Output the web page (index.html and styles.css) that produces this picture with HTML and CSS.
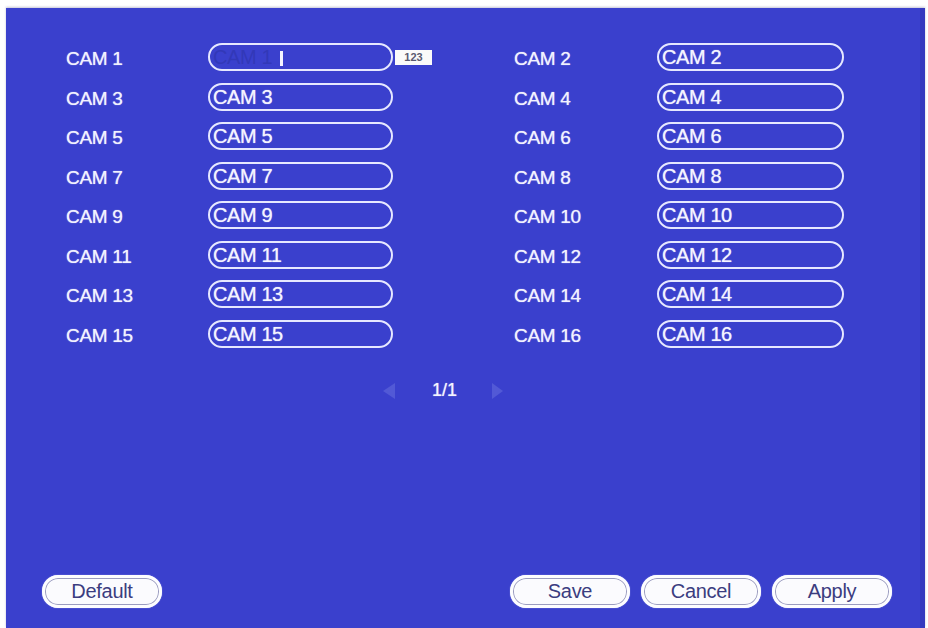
FILE: index.html
```html
<!doctype html>
<html lang="en">
  <head>
    <meta charset="UTF-8" />
    <title>Channel Name</title>
    <link rel="stylesheet" href="styles.css">
  </head>
  <body>
    <div class="panel">
      <div class="cam-grid">
        <label class="cam-label">CAM 1</label>
        <div class="field-wrap">
          <input class="cam-name editing" type="text" value="CAM 1" readonly />
          <span class="caret"></span>
        </div>
        <div class="ime"><span class="ime-badge">123</span></div>
        <label class="cam-label">CAM 2</label>
        <input class="cam-name" type="text" value="CAM 2" readonly />

        <label class="cam-label">CAM 3</label>
        <input class="cam-name" type="text" value="CAM 3" readonly />
        <div></div>
        <label class="cam-label">CAM 4</label>
        <input class="cam-name" type="text" value="CAM 4" readonly />

        <label class="cam-label">CAM 5</label>
        <input class="cam-name" type="text" value="CAM 5" readonly />
        <div></div>
        <label class="cam-label">CAM 6</label>
        <input class="cam-name" type="text" value="CAM 6" readonly />

        <label class="cam-label">CAM 7</label>
        <input class="cam-name" type="text" value="CAM 7" readonly />
        <div></div>
        <label class="cam-label">CAM 8</label>
        <input class="cam-name" type="text" value="CAM 8" readonly />

        <label class="cam-label">CAM 9</label>
        <input class="cam-name" type="text" value="CAM 9" readonly />
        <div></div>
        <label class="cam-label">CAM 10</label>
        <input class="cam-name" type="text" value="CAM 10" readonly />

        <label class="cam-label">CAM 11</label>
        <input class="cam-name" type="text" value="CAM 11" readonly />
        <div></div>
        <label class="cam-label">CAM 12</label>
        <input class="cam-name" type="text" value="CAM 12" readonly />

        <label class="cam-label">CAM 13</label>
        <input class="cam-name" type="text" value="CAM 13" readonly />
        <div></div>
        <label class="cam-label">CAM 14</label>
        <input class="cam-name" type="text" value="CAM 14" readonly />

        <label class="cam-label">CAM 15</label>
        <input class="cam-name" type="text" value="CAM 15" readonly />
        <div></div>
        <label class="cam-label">CAM 16</label>
        <input class="cam-name" type="text" value="CAM 16" readonly />
      </div>

      <div class="pager">
        <span class="arrow arrow-left"></span>
        <span class="page-num">1/1</span>
        <span class="arrow arrow-right"></span>
      </div>

      <div class="actions">
        <button class="btn">Default</button>
        <div class="actions-right">
          <button class="btn">Save</button>
          <button class="btn">Cancel</button>
          <button class="btn">Apply</button>
        </div>
      </div>
    </div>
  </body>
</html>
```

FILE: styles.css
```css
html,
body {
  margin: 0;
  background: #fff;
  overflow: hidden;
}
body {
  font-family: 'Liberation Sans', Arial, sans-serif;
  padding: 8px 3px 0 6px;
}
.panel {
  height: 620px;
  background: #3a40cd;
  box-shadow: inset -5px 0 0 #3539bf, 0 -1px 2px rgba(60, 60, 120, 0.3);
  display: flex;
  flex-direction: column;
  box-sizing: border-box;
  padding: 35px 0 20px;
}
.cam-grid {
  display: grid;
  grid-template-columns: 142px 185px 121px 143px 187px;
  grid-auto-rows: 28px;
  row-gap: 11.5px;
  padding-left: 60px;
  align-items: center;
}
.cam-label {
  color: #f2f2ff;
  font-size: 19px;
  letter-spacing: -0.3px;
  padding-top: 4px;
  text-shadow: 0 0 1px rgba(255, 255, 255, 0.8);
}
.field-wrap {
  position: relative;
  height: 28px;
}
.cam-name {
  width: 100%;
  height: 28px;
  box-sizing: border-box;
  margin: 0;
  padding: 1px 0 0 3px;
  border: 2px solid #e6e8ff;
  border-radius: 14px / 14px;
  background: transparent;
  color: #f4f4ff;
  font-family: inherit;
  font-size: 20px;
  letter-spacing: -0.4px;
  outline: none;
  text-shadow: 0 0 1px rgba(255, 255, 255, 0.8);
}
.cam-name.editing {
  color: #3238b8;
  text-shadow: none;
}
.caret {
  position: absolute;
  left: 72px;
  top: 8px;
  width: 3px;
  height: 15px;
  background: #f4f4ff;
}
.ime {
  display: flex;
  align-items: center;
  padding-left: 2px;
}
.ime-badge {
  background: #fafafa;
  color: #5a5a70;
  font-size: 11px;
  font-weight: bold;
  width: 37px;
  height: 15px;
  line-height: 15px;
  text-align: center;
}
.pager {
  display: flex;
  align-items: center;
  margin-top: 35px;
  padding-left: 377px;
  height: 16px;
}
.arrow {
  width: 0;
  height: 0;
  border-top: 8px solid transparent;
  border-bottom: 8px solid transparent;
}
.arrow-left {
  border-right: 12px solid #5259d6;
}
.arrow-right {
  border-left: 11px solid #5259d6;
}
.page-num {
  color: #f4f4ff;
  font-size: 18px;
  margin: 0 35px 0 37px;
  text-shadow: 0 0 1px rgba(255, 255, 255, 0.8);
}
.actions {
  margin-top: auto;
  display: flex;
  justify-content: space-between;
  padding: 0 33px 0 36px;
}
.actions-right {
  display: flex;
  gap: 11px;
}
.btn {
  width: 120px;
  height: 33px;
  box-sizing: border-box;
  border: 3px solid #fdfdff;
  border-radius: 16px;
  background: #fbfbfe;
  box-shadow: inset 0 0 0 1px #9b9cc0, 0 0 1px #d0d2ff;
  color: #3b3d80;
  font-family: inherit;
  font-size: 20px;
  letter-spacing: -0.3px;
  padding: 0;
  cursor: pointer;
}
```
